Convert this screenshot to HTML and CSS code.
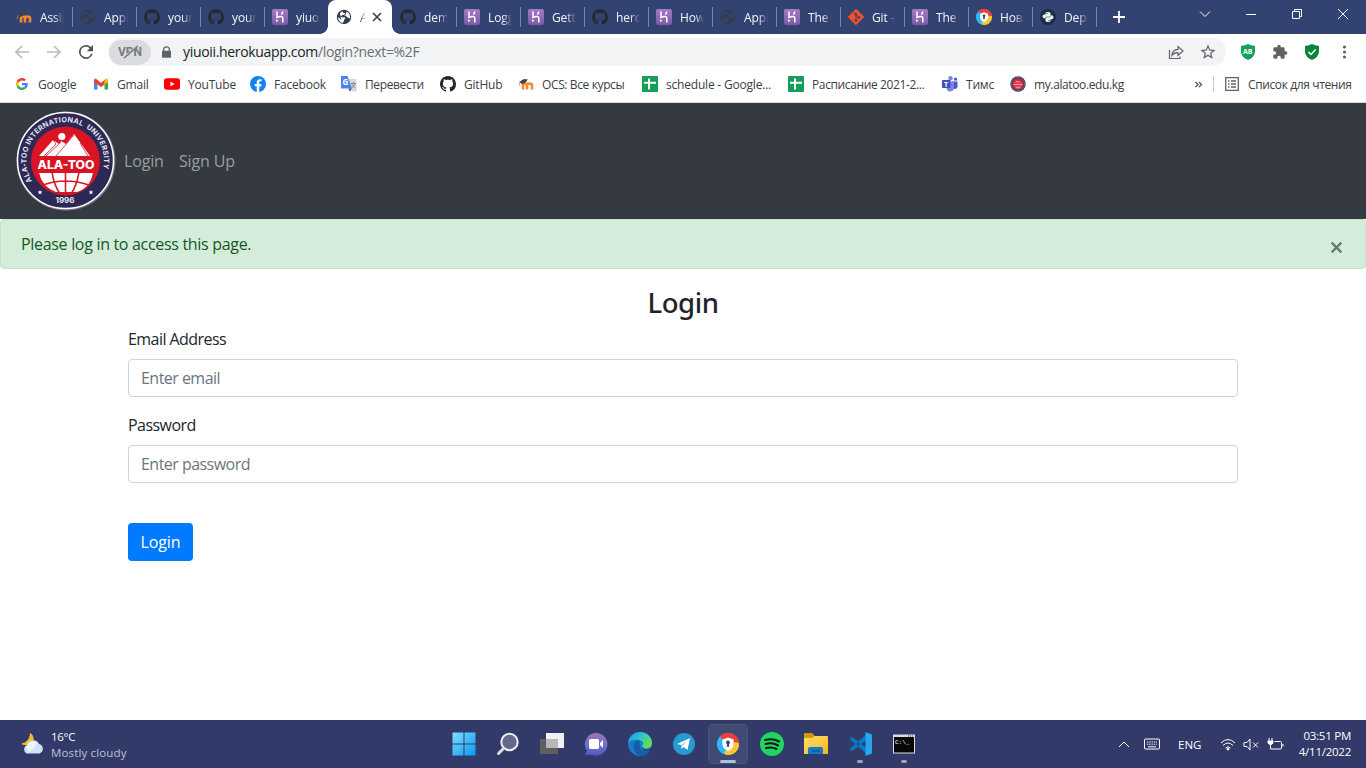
FILE: index.html
```html
<!DOCTYPE html>
<html lang="en">
<head>
<meta charset="utf-8">
<title>Login</title>
<link rel="stylesheet" href="styles.css">
</head>
<body>
<svg class="defs" width="0" height="0">
<defs>
<linearGradient id="purple" x2="0" y2="1"><stop stop-color="#a57bc5"/><stop offset="1" stop-color="#7c5aa6"/></linearGradient>
<linearGradient id="win" x2="1" y2="1"><stop stop-color="#7be0ff"/><stop offset="1" stop-color="#0797f5"/></linearGradient>
<linearGradient id="chatg" x2="0" y2="1"><stop stop-color="#a26fb5"/><stop offset=".5" stop-color="#7470c8"/><stop offset="1" stop-color="#5058c9"/></linearGradient>
<linearGradient id="edgeg" x2="1" y2=".6"><stop stop-color="#2592e8"/><stop offset=".5" stop-color="#2cc3d2"/><stop offset="1" stop-color="#66e052"/></linearGradient>
<linearGradient id="folderg" x2="1" y2="1"><stop stop-color="#ffdc68"/><stop offset="1" stop-color="#f7b722"/></linearGradient>
<symbol id="moodle" viewBox="0 0 16 16"><path d="M5 13.500V9.500q0-2 2-2t2 2v4M9 9.500q0-2 2.300-2 2.700 0 2.700 2v4" fill="none" stroke="#f18a2c" stroke-width="2.600"/><path d="M1 6 6 3l4 .5L7 7 4 8z" fill="#4a4240"/><path d="M2 6.300 1 10" stroke="#b98b60" stroke-width=".7"/></symbol>
<symbol id="globe" viewBox="0 0 16 16"><circle cx="8" cy="8" r="7.200" fill="#343d4a"/><path d="M6.700 2.200c-.2 1.500 1 1.800 2.200 1.800.8 1.600-1 2-2.500 2C5.500 7 4.600 7.400 4.400 8.300l4.300-.1c1 1.200.6 1.900-.6 2.200.2 1.600-1.200 2.200-1 3.700C3.500 13.500 2 10.700 2.200 8L4 9.500 5 11l-.4-4.500C3 5 4.500 2.900 6.700 2.200zm3.800.6c3.300 1.500 4 4.300 3.300 7-1-1.300-3.200-1-3.600-2.700L8.400 6.400l1.200-.9z" fill="var(--land)"/></symbol>
<symbol id="github" viewBox="0 0 16 16"><path fill="#24292e" d="M8 0C3.580 0 0 3.580 0 8c0 3.540 2.290 6.530 5.470 7.590.4.07.55-.17.55-.38 0-.19-.01-.82-.01-1.490-2.010.37-2.530-.49-2.690-.94-.09-.23-.48-.94-.82-1.130-.28-.15-.68-.52-.01-.53.63-.01 1.080.58 1.230.82.72 1.210 1.870.87 2.330.66.07-.52.28-.87.51-1.070-1.780-.2-3.640-.89-3.640-3.950 0-.87.31-1.590.82-2.150-.08-.2-.36-1.020.08-2.120 0 0 .67-.21 2.200.82.64-.18 1.320-.27 2-.27.68 0 1.360.09 2 .27 1.530-1.040 2.200-.82 2.200-.82.44 1.100.16 1.920.08 2.120.51.56.82 1.270.82 2.150 0 3.070-1.870 3.750-3.650 3.950.29.25.54.73.54 1.480 0 1.070-.01 1.930-.01 2.200 0 .21.15.46.55.38A8.013 8.013 0 0 0 16 8c0-4.420-3.580-8-8-8z"/></symbol>
<symbol id="heroku" viewBox="0 0 16 16"><rect width="16" height="16" rx="2" fill="url(#purple)"/><path d="M5 2.500v6q5.800-2.200 5.800.6v4.400M10.800 2.500q0 1.800-1.500 3" fill="none" stroke="#fff" stroke-width="1.500"/><path d="M4.300 10v3.500l2-1.700z" fill="#fff"/></symbol>
<symbol id="git" viewBox="0 0 16 16"><path d="M8 .3 15.700 8 8 15.700.3 8z" fill="#f4502c" stroke="#f4502c" stroke-linejoin="round"/><path d="M5.500 3 8 5.500v6M8 6l3 2.500" stroke="#334371" fill="none"/><g fill="#334371"><circle cx="8" cy="5.500" r="1.200"/><circle cx="8" cy="11.500" r="1.200"/><circle cx="11" cy="8.500" r="1.200"/></g></symbol>
<symbol id="secure" viewBox="0 0 24 24"><circle cx="12" cy="12" r="12" fill="#27b5f5"/><path d="M12 12 3 4A12 12 0 0 1 24 12l-6 2z" fill="#ef3f3c"/><path d="M24 11A12 12 0 0 1 10 23.800l-4-4 10-3 2-7z" fill="#ffc52e"/><path d="M4 3.600A12 12 0 0 0 7 22.900l3-5-5-6z" fill="#2fb8f7"/><path d="m12 5 6 2.200v5c0 3.500-2.500 5.800-6 7.300-3.500-1.500-6-3.800-6-7.300v-5z" fill="#fff"/><circle cx="12" cy="10.300" r="2" fill="#344267"/><path d="M11.200 11h1.600l.6 4h-2.800z" fill="#344267"/></symbol>
<symbol id="python" viewBox="0 0 16 16"><circle cx="8" cy="8" r="8" fill="#173044"/><path d="M5.500 6V4.300Q5.500 3 8 3t2.500 1.300V6.500Q10.500 7.700 9 7.700H6.500Q5.200 7.700 5.200 9.300H4Q2.500 9 2.500 7.500T4 5.500h4M10.500 10v1.700Q10.500 13 8 13t-2.500-1.300V9.500Q5.500 8.300 7 8.300h2.500q1.300 0 1.300-2h1.200q1.500.5 1.500 2t-1.500 2H8" fill="#eef3f4"/><path d="M6.500 4.500h1M8.500 11.500h1" stroke="#173044"/></symbol>
<symbol id="google" viewBox="0 0 48 48"><path fill="#ea4335" d="M24 9.500c3.540 0 6.710 1.220 9.210 3.600l6.850-6.850C35.900 2.380 30.470 0 24 0 14.620 0 6.510 5.380 2.560 13.220l7.980 6.190C12.430 13.720 17.740 9.500 24 9.500z"/><path fill="#4285f4" d="M46.980 24.550c0-1.570-.15-3.090-.38-4.550H24v9.020h12.940c-.58 2.960-2.260 5.480-4.780 7.180l7.730 6c4.510-4.180 7.090-10.360 7.090-17.650z"/><path fill="#fbbc05" d="M10.530 28.590A14.500 14.500 0 0 1 10.540 19.410l-7.980-6.190a24 24 0 0 0 0 21.560z"/><path fill="#34a853" d="M24 48c6.480 0 11.930-2.130 15.890-5.810l-7.730-6C30.010 37.640 27.240 38.490 24 38.490c-6.260 0-11.570-4.220-13.470-9.910l-7.980 6.190C6.510 42.620 14.620 48 24 48z"/></symbol>
<symbol id="gmail" viewBox="0 0 16 16"><path d="M1 13.500V4h3.500v9.500z" fill="#4285f4"/><path d="M11.500 13.500V4H15v9.500z" fill="#34a853"/><path d="M1 4.500Q1 2.200 3 2.700l5 4 5-4-1.500 5.800L8 11 4.500 8.500 1 6z" fill="#ea4335"/><path d="M11.500 4 13 2.700q2-.5 2 1.800v1.500l-3.500 2.500z" fill="#fbbc04"/></symbol>
<symbol id="youtube" viewBox="0 0 16 16"><rect y="2.300" width="16" height="11.500" rx="2.700" fill="red"/><path d="m6.400 5.500 4.200 2.500-4.200 2.500z" fill="#fff"/></symbol>
<symbol id="facebook" viewBox="0 0 24 24"><circle cx="12" cy="12" r="12" fill="#1382f5"/><path fill="#fff" d="M10.130 24v-8.440H7.080v-3.490h3.050V9.410c0-3.020 1.790-4.690 4.530-4.690 1.310 0 2.680.24 2.680.24v2.970h-1.510c-1.490 0-1.960.93-1.960 1.890v2.260h3.330l-.53 3.490h-2.800V24z"/></symbol>
<symbol id="translate" viewBox="0 0 16 16"><path d="M6 3h9.500v12.500H9z" fill="#d5d8de"/><path d="M0 0h6.500L11 12.500H0z" fill="#4c83e8"/><path d="m7.500 12.500 3.500 0-2.500 3z" fill="#3559b0"/><path d="M10 7.500h5M12.500 6v1.500M14 8q-1 3-3.500 4M11 8.500q1 2 3.500 3.500" stroke="#718096" stroke-width=".9" fill="none"/><text x="1.500" y="9" font-size="8" font-weight="700" fill="#fff">G</text></symbol>
<symbol id="sheet" viewBox="0 0 16 16"><rect width="16" height="16" rx="1" fill="#139e59"/><path d="M2 6.700h12M7 2.500v11" stroke="#fff" stroke-width="2"/></symbol>
<symbol id="teams" viewBox="0 0 16 16"><circle cx="8.500" cy="2.300" r="2.200" fill="#7b83eb"/><circle cx="13.500" cy="3.200" r="1.600" fill="#5059c9"/><path d="M10 5.500h5.500V10q0 3-3 3H10z" fill="#5059c9"/><path d="M4.500 5.500H12V12q-.5 3.500-3.800 3.500T4.500 12z" fill="#7b83eb"/><rect y="4" width="8.500" height="8" rx=".7" fill="#464eb8"/><text x="2" y="10.500" font-size="7" font-weight="700" fill="#fff">T</text></symbol>
<symbol id="mini-seal" viewBox="0 0 16 16"><circle cx="8" cy="8" r="7.700" fill="#38345b"/><circle cx="8" cy="8" r="6.500" fill="none" stroke="#878091" stroke-width=".7"/><circle cx="8" cy="8" r="5.500" fill="#da2434"/><path d="M4 6.500 7 4.500l4 1.500 1 .5M4.500 10.500h7l-2 2h-3z" fill="#e8858f"/><path d="M3.500 8.500h9" stroke="#f29aa2" stroke-width="1.300"/></symbol>
</defs>
</svg>

<header class="browser">
  <div class="strip">
    <div class="tabs">
      <div class="tab"><svg><use href="#moodle"/></svg><span>Assig</span></div>
      <div class="tab"><svg><use href="#globe"/></svg><span>Appl</span></div>
      <div class="tab"><svg><use href="#github"/></svg><span>your</span></div>
      <div class="tab"><svg><use href="#github"/></svg><span>your</span></div>
      <div class="tab"><svg><use href="#heroku"/></svg><span>yiuoi</span></div>
      <div class="tab active"><svg><use href="#globe"/></svg><span>A</span><svg class="close" viewBox="0 0 10 10"><path d="m1 1 8 8M9 1 1 9"/></svg></div>
      <div class="tab"><svg><use href="#github"/></svg><span>dem</span></div>
      <div class="tab"><svg><use href="#heroku"/></svg><span>Logg</span></div>
      <div class="tab"><svg><use href="#heroku"/></svg><span>Getti</span></div>
      <div class="tab"><svg><use href="#github"/></svg><span>hero</span></div>
      <div class="tab"><svg><use href="#heroku"/></svg><span>How</span></div>
      <div class="tab"><svg><use href="#globe"/></svg><span>Appl</span></div>
      <div class="tab"><svg><use href="#heroku"/></svg><span>The I</span></div>
      <div class="tab"><svg><use href="#git"/></svg><span>Git -</span></div>
      <div class="tab"><svg><use href="#heroku"/></svg><span>The I</span></div>
      <div class="tab"><svg><use href="#secure"/></svg><span>Нова</span></div>
      <div class="tab"><svg><use href="#python"/></svg><span>Depl</span></div>
    </div>
    <svg class="plus" viewBox="0 0 12 12"><path d="M6 0v12M0 6h12"/></svg>
    <div class="controls">
      <svg viewBox="0 0 12 12"><path d="m1 3.500 5 5 5-5"/></svg>
      <svg viewBox="0 0 12 12"><path d="M1 6.500h10"/></svg>
      <svg viewBox="0 0 12 12"><path d="M1.500 3.500h7v7h-7zM3.500 3.500v-2h7v7h-2"/></svg>
      <svg viewBox="0 0 12 12"><path d="m1 1 10 10M11 1 1 11"/></svg>
    </div>
  </div>
  <div class="toolbar">
    <svg class="nav" viewBox="0 0 16 16"><path d="M15 8H2M8 2 2 8l6 6"/></svg>
    <svg class="nav" viewBox="0 0 16 16"><path d="M1 8h13M8 2l6 6-6 6"/></svg>
    <svg class="reload" viewBox="0 0 16 16"><path d="M13.650 2.350A8 8 0 1 0 15.730 10h-2.080A6 6 0 1 1 8 2c1.660 0 3.140.69 4.220 1.780L9 7h7V0z"/></svg>
    <div class="address">
      <div class="vpn"><span>VPN</span><svg viewBox="0 0 24 14"><path class="gap" d="M5 13 19 1"/><path d="M6 13 20 1"/></svg></div>
      <svg class="lock" viewBox="0 0 10 13"><path fill="#5f6368" d="M1 5V4a4 4 0 0 1 8 0v1q1 0 1 1v6q0 1-1 1H1q-1 0-1-1V6q0-1 1-1zm1.500 0h5V4a2.500 2.500 0 0 0-5 0z"/></svg>
      <span class="url"><b>yiuoii.herokuapp.com</b>/login?next=%2F</span>
      <svg class="share" viewBox="0 0 16 16"><path d="M1.500 6v8.500H12v-2M4 11.500q.3-6 6-6.200V2.500L15 7l-5 4.500V8.700q-4-.2-6 2.800z"/></svg>
      <svg class="star" viewBox="0 0 24 24"><path fill="#5f6368" d="m22 9.240-7.190-.62L12 2 9.190 8.630 2 9.240l5.460 4.730L5.820 21 12 17.270 18.180 21l-1.630-7.030zM12 15.400l-3.760 2.270 1-4.280-3.320-2.880 4.380-.38L12 6.100l1.710 4.040 4.380.38-3.320 2.880 1 4.280z"/></svg>
    </div>
    <div class="extensions">
      <svg viewBox="0 0 16 16"><path d="M1 2q4-.3 7-2 3 1.700 7 2v6q-.3 5-7 8-6.700-3-7-8z" fill="#13a25a"/><text x="3" y="10.300" font-size="7" font-weight="700" fill="#fff">AB</text></svg>
      <svg viewBox="0 0 24 24"><path fill="#5f6368" d="M20.500 11H19V7a2 2 0 0 0-2-2h-4V3.500a2.500 2.500 0 0 0-5 0V5H4a2 2 0 0 0-2 2v3.800h1.500a2.700 2.700 0 0 1 0 5.400H2V20a2 2 0 0 0 2 2h3.800v-1.500a2.700 2.700 0 0 1 5.400 0V22H17a2 2 0 0 0 2-2v-4h1.500a2.500 2.500 0 0 0 0-5z"/></svg>
      <svg viewBox="0 0 16 16"><path d="M1 2q4-.3 7-2 3 1.700 7 2v6q-.3 5-7 8-6.700-3-7-8z" fill="#07863f"/><path d="m4.500 8 2.500 2.500 4.500-5" stroke="#fff" stroke-width="1.500" fill="none"/></svg>
      <svg viewBox="0 0 16 16" fill="#5f6368"><circle cx="8.500" cy="3" r="1.600"/><circle cx="8.500" cy="8" r="1.600"/><circle cx="8.500" cy="13" r="1.600"/></svg>
    </div>
  </div>
  <div class="bookmarks">
    <div class="mark"><svg class="sm"><use href="#google"/></svg><span>Google</span></div>
    <div class="mark"><svg><use href="#gmail"/></svg><span>Gmail</span></div>
    <div class="mark"><svg><use href="#youtube"/></svg><span>YouTube</span></div>
    <div class="mark"><svg><use href="#facebook"/></svg><span>Facebook</span></div>
    <div class="mark cyr"><svg><use href="#translate"/></svg><span>Перевести</span></div>
    <div class="mark"><svg><use href="#github"/></svg><span>GitHub</span></div>
    <div class="mark cyr"><svg><use href="#moodle"/></svg><span>OCS: Все курсы</span></div>
    <div class="mark"><svg><use href="#sheet"/></svg><span>schedule - Google...</span></div>
    <div class="mark cyr"><svg><use href="#sheet"/></svg><span>Расписание 2021-2...</span></div>
    <div class="mark"><svg><use href="#teams"/></svg><span>Тимс</span></div>
    <div class="mark cyr"><svg><use href="#mini-seal"/></svg><span>my.alatoo.edu.kg</span></div>
    <svg class="more" viewBox="0 0 8 8"><path d="m1 1 3 3-3 3M5 1l3 3-3 3"/></svg>
    <div class="reading"><svg viewBox="0 0 14 14"><path d="M.7.7h12.600v12.600H.7zM3 4h1.500M6 4h5M3 7h1.500M6 7h5M3 10h1.500M6 10h5"/></svg><span>Список для чтения</span></div>
  </div>
</header>

<main class="page">
  <nav class="navbar">
    <svg class="seal" viewBox="0 0 100 100">
      <defs><path id="ring" d="M16 70A38.800 38.800 0 1 1 83 69"/><clipPath id="half"><path d="M23 62h54q-2 17-20 25H43Q25 79 23 62z"/></clipPath></defs>
      <circle cx="50" cy="50" r="49.500" fill="#77788e"/><circle cx="49.500" cy="49.500" r="48" fill="#2d2855" stroke="#fff" stroke-width="1.500"/>
      <circle cx="49.500" cy="50" r="34.500" fill="#d91524"/>
      <circle cx="45.800" cy="25.500" r="3.600" fill="#fff"/>
      <path d="m23 45 14-16 6 4 2-3 5 3 8-10 16 22z" fill="#fff"/><path d="m37 29 3 4-12 12M45 31l-15 14M58 24l-18 21M64 32l8 13" stroke="#d91524" stroke-width=".8" fill="none"/>
      <text x="50" y="57.500" class="seal-name" textLength="57" lengthAdjust="spacingAndGlyphs">ALA-TOO</text>
      <g clip-path="url(#half)"><path d="M23 62h54q-3 15-16 19H40Q26 76 23 62z" fill="#fff"/><path d="M49.500 61v24M36 61q2 13 8 22M63 61q-2 13-8 22M27 74q22-8 46 0" fill="none" stroke="#d91524" stroke-width="1.600"/></g>
      <text class="seal-ring"><textPath href="#ring">ALA-TOO INTERNATIONAL &#160;UNIVERSITY</textPath></text>
      <text x="49" y="91.500" class="seal-year">1996</text><path d="m24 79 .7 1.500 1.600.1-1.200 1.100.4 1.600-1.500-.8-1.500.8.4-1.600-1.200-1.100 1.600-.1zM75 79l.7 1.500 1.600.1-1.200 1.100.4 1.600-1.500-.8-1.500.8.4-1.600-1.200-1.100 1.600-.1z" fill="#fff"/>
    </svg>
    <a class="link login-link">Login</a><a class="link">Sign Up</a>
  </nav>
  <div class="alert"><span>Please log in to access this page.</span><svg viewBox="0 0 12 12"><path d="m1.500 1.500 9 9M10.500 1.500l-9 9"/></svg></div>
  <form class="form">
    <h1>Login</h1>
    <label>Email Address</label>
    <input class="email" type="text" placeholder="Enter email">
    <label>Password</label>
    <input type="text" placeholder="Enter password">
    <button type="button">Login</button>
  </form>
</main>

<footer class="taskbar">
  <div class="weather">
    <svg viewBox="0 0 24 22"><path d="M10 0q5 5 1 10-4 3-10 1 8-2 9-11z" fill="#f5bd28" stroke="#f5bd28"/><path d="M6 21a5 5 0 0 1 0-9 7 7 0 0 1 13-1 5.200 5.200 0 0 1 0 10z" fill="#cfe3f5"/><path d="M7 19a4 4 0 0 1 0-6 6 6 0 0 1 10-3l-5 7z" fill="#edf5fb"/></svg>
    <div><span class="temp">16°C</span><span class="sky">Mostly cloudy</span></div>
  </div>
  <div class="apps">
    <div class="app"><svg viewBox="0 0 24 24"><path d="M.5.500h11v11H.5zM12.500.5h11v11h-11zM.5 12.500h11v11H.5zM12.500 12.500h11v11h-11z" fill="url(#win)"/></svg></div>
    <div class="app"><svg viewBox="0 0 24 24"><circle cx="13.500" cy="10" r="8.200" fill="#62698c" stroke="#eee" stroke-width="2"/><path d="m7.500 16.500-5 5" stroke="#ddd" stroke-width="3" stroke-linecap="round"/></svg></div>
    <div class="app"><svg viewBox="0 0 24 24"><path d="M6 1h18v15H6z" fill="#f1f1f1"/><path d="M0 7h18v15H0z" fill="#5d605f"/><path d="M6 7h12v9H6z" fill="#b7b7b8"/></svg></div>
    <div class="app"><svg viewBox="0 0 24 24"><path d="M12 1a11.300 11.300 0 1 1-4 21.800H1l2-4A11.300 11.300 0 0 1 12 1z" fill="url(#chatg)"/><rect x="5" y="7" width="10" height="10" rx="1.500" fill="#fff"/><path d="m16 11 3-3v8l-3-3z" fill="#fff"/></svg></div>
    <div class="app"><svg viewBox="0 0 24 24"><circle cx="12" cy="12" r="12" fill="#197bce"/><path d="M0 11C1 4 6 0 12 0c8 0 12 6 12 11 0 6-8 7-10 3 3-3 0-6-4-6-4-1-8 0-10 3z" fill="url(#edgeg)"/><path d="M11 8C2 10 5 22 13 24c4 0 7-2 9-5-6 2-11-1-10-6z" fill="#155da7"/><path d="M13.500 14q0 2.500 3.500 3.500 4 1 7-2.500v2l-2 2q-8 1.500-8.500-5z" fill="#313a68"/></svg></div>
    <div class="app"><svg viewBox="0 0 24 24"><circle cx="12" cy="12" r="11" fill="#269bd1"/><path d="m5 12 13-6-2.500 12-4-3-2 2-.5-4z" fill="#fff"/><path d="m9 13 6-4-4.500 5-1 2" fill="#a6cce3"/></svg></div>
    <div class="app selected"><svg viewBox="-1 -1 26 26"><use href="#secure" width="24" height="24"/></svg></div>
    <div class="app"><svg viewBox="0 0 24 24"><circle cx="12" cy="12" r="12" fill="#1ed760"/><path d="M5 8q8-2 14 1.500M5.500 12q7-2 12.500 1.500M6 16q6-1.500 10.500 1" stroke="#111b16" stroke-width="2.100" stroke-linecap="round" fill="none"/></svg></div>
    <div class="app"><svg viewBox="0 0 24 24"><path d="M0 2q0-1 1-1h7l3 3h12v5H0z" fill="#d99900"/><path d="M0 6h8l3-2h12q1 0 1 1v17H0z" fill="url(#folderg)"/><path d="M4 22v-5q0-2 2-2h11q2 0 2 2v5z" fill="#1479c9"/><path d="M8 19h8" stroke="#095aa0" stroke-width="1.500"/></svg></div>
    <div class="app running"><svg viewBox="0 0 24 24"><path d="m2 7 16 14v-5L4 5.500zM2 17 18 3v5L4 18.500z" fill="#0879c5" stroke="#0879c5" stroke-linejoin="round"/><path d="m17.500 0 6.500 2.500v19L17.500 24z" fill="#28a5ed"/></svg></div>
    <div class="app running"><svg viewBox="0 0 24 24"><rect x="1" y="2.500" width="22" height="19" fill="#ddd"/><path d="M2 5h20v15.500H2z" fill="#080808"/><path d="M16 4h1M18 4h1M20 4h1" stroke="#345"/><text x="3" y="12" font-size="6" fill="#fff" font-family="Liberation Mono">C:\_</text></svg></div>
  </div>
  <div class="tray">
    <svg class="chev" viewBox="0 0 12 8"><path d="m1 7 5-5 5 5"/></svg>
    <svg class="keyb" viewBox="0 0 16 12"><rect x=".5" y="1" width="15" height="10" rx="1"/><path d="M3 4h10M3 6.200h10" stroke-dasharray="1.300 1"/><path d="M4 8.800h8"/></svg>
    <span class="lang">ENG</span>
    <svg class="wifi" viewBox="0 0 16 13"><path d="M1 5q7-7 14 0M3 7.500q5-5 10 0M5.500 10q2.500-2.500 5 0"/><circle cx="8" cy="11" r="1" fill="#fff"/></svg>
    <svg class="sound" viewBox="0 0 16 13"><path d="M1 4.500h3L7 1v11L4 8.500H1zM10 4.500l5 5M15 4.500l-5 5"/></svg>
    <svg class="battery" viewBox="0 0 17 13"><path d="M7 11h6.500q1 0 1-1V4.500q0-1-1-1H7.500M16 6v2.500M2 0v3M5 0v3M3.500 6v5H7"/><path d="M1 3h5v2Q5 6.500 3.500 6.500T1 5z" fill="#fff"/></svg>
    <div class="clock"><span>03:51 PM</span><span>4/11/2022</span></div>
  </div>
</footer>
</body>
</html>
```
FILE: styles.css
```css
* { box-sizing: border-box; }
body { margin: 0; width: 1366px; height: 768px; overflow: hidden; display: flex; flex-direction: column; background: #fff; font-family: "Open Sans", "Noto Sans", sans-serif; font-size: 12px; }
svg { display: block; flex: none; }
.defs { position: absolute; }
.browser { height: 103px; flex: none; border-bottom: 1px solid #d5d7da; }
.strip { height: 34px; background: #334371; display: flex; padding-left: 8px; --land: #334371; }
.tabs { display: flex; }
.tab { width: 64px; height: 34px; display: flex; align-items: center; padding-left: 8px; color: #f4f5f9; position: relative; letter-spacing: -.1px; }
.tab::after { content: ""; width: 1px; height: 20px; background: #7a84a3; margin: 0 -1px 0 auto; }
.tab svg { width: 16px; height: 16px; }
.tab span { width: 24px; flex: none; margin-left: 8px; white-space: nowrap; -webkit-mask-image: linear-gradient(90deg, #000 60%, transparent); mask-image: linear-gradient(90deg, #000 60%, transparent); }
.active { --land: #fff; background: #fff; color: #444; border-radius: 8px 8px 0 0; z-index: 1; }
.tab:nth-child(5)::after, .active::after { display: none; }
.active::before { content: ""; position: absolute; left: -8px; right: -8px; bottom: 0; height: 8px; background: radial-gradient(circle at 0 0, transparent 7.500px, #fff 8px) left / 8px 8px no-repeat, radial-gradient(circle at 8px 0, transparent 7.500px, #fff 8px) right / 8px 8px no-repeat; }
.active span { width: 6px; -webkit-mask-image: linear-gradient(90deg, #000, transparent); mask-image: linear-gradient(90deg, #000, transparent); }
.active .close { width: 10px; height: 10px; margin-left: 6px; }
.close path { stroke: #3c4043; stroke-width: 1.600; }
.plus { width: 12px; height: 12px; margin: 11px 0 0 17px; }
.plus path { stroke: #fff; stroke-width: 1.800; }
.controls { display: flex; gap: 34px; margin: 8px 17px 0 auto; }
.controls svg { width: 12px; height: 12px; }
.controls path { fill: none; stroke: #fff; }
.toolbar { height: 36px; display: flex; align-items: center; padding-left: 14px; }
.nav { width: 16px; height: 16px; margin-right: 16px; }
.nav path { fill: none; stroke: #b9bbbe; stroke-width: 1.700; }
.reload { width: 14px; height: 14px; margin-left: 1px; fill: #505458; }
.address { width: 1118px; height: 28px; border-radius: 14px; background: #f1f3f4; margin-left: 15px; display: flex; align-items: center; padding: 0 9px 0 1px; }
.vpn { width: 42px; height: 25px; border-radius: 13px; background: #dadce0; display: grid; place-items: center; color: #777b81; font: 700 12px Roboto, sans-serif; }
.vpn span, .vpn svg { grid-area: 1 / 1; }
.vpn svg { width: 24px; height: 14px; }
.vpn path { stroke: #74787d; stroke-width: 1.500; }
.vpn .gap { stroke: #dadce0; }
.lock { width: 9px; height: 12px; margin-left: 11px; }
.url { font-size: 14px; letter-spacing: -.33px; color: #6a6e73; margin: -1px 0 0 12px; }
.url b { font-weight: 400; color: #202124; }
.share { width: 16px; height: 16px; margin-left: auto; }
.share path { fill: none; stroke: #5f6368; stroke-width: 1.200; }
.star { width: 18px; height: 18px; margin-left: 15px; }
.extensions { display: flex; gap: 16px; margin-left: 14px; }
.extensions svg { width: 16px; height: 16px; }
.bookmarks { height: 32px; padding: 0 15px 4px 14px; display: grid; align-items: center; grid-template-columns: 79px 71px 86px 91px 99px 78px 124px 146px 154px 68px 184px 19px 1fr; color: #3c4043; letter-spacing: -.2px; }
.mark { display: flex; align-items: center; gap: 8px; white-space: nowrap; }
.cyr, .reading { letter-spacing: -.38px; }
.mark svg { width: 16px; height: 16px; }
.mark .sm { width: 12px; height: 12px; margin: 0 2px; }
.more { width: 8px; height: 7px; overflow: visible; }
.more path { fill: none; stroke: #50545a; stroke-width: 1.500; }
.reading { height: 16px; border-left: 1px solid #c8cacd; display: flex; align-items: center; padding-left: 11px; gap: 9px; white-space: nowrap; }
.reading svg { width: 14px; height: 14px; }
.reading path { fill: none; stroke: #5f6368; stroke-width: 1.300; }
.page { flex: 1; font-size: 16px; }
.navbar { height: 116px; background: #343a40; display: flex; align-items: center; padding-left: 16px; }
.seal { width: 100px; height: 100px; margin-right: 8px; }
.seal text { font-family: Inter, sans-serif; font-weight: 700; }
.seal .seal-name { text-anchor: middle; font-weight: 800; font-size: 11.500px; fill: #fff; }
.seal .seal-ring { font-size: 7.200px; letter-spacing: .28px; fill: #e8e7ef; }
.seal .seal-year { font-size: 8px; text-anchor: middle; fill: #e8e7ef; }
.link { color: #9a9da0; letter-spacing: -.15px; }
.login-link { width: 55px; }
.alert { height: 50px; border: 1px solid #c3e6cb; border-radius: 4px; background: #d4edda; color: #155724; display: flex; align-items: center; justify-content: space-between; padding: 0 22px 0 20px; letter-spacing: -.31px; }
.alert svg { width: 13px; height: 13px; margin-top: 6px; }
.alert path { stroke: #6a776d; stroke-width: 2; }
.form { width: 1110px; margin: 0 auto; color: #212529; display: flex; flex-direction: column; letter-spacing: -.55px; }
.form h1 { font: 500 27.500px/34px "Noto Sans", sans-serif; letter-spacing: -.4px; text-align: center; margin: 17px 0 7px; }
.form label { height: 24px; line-height: 24px; margin-bottom: 8px; }
.form input { font: inherit; letter-spacing: -.53px; height: 38px; border: 1px solid #ced4da; border-radius: 4px; padding: 6px 12px; }
.form input::placeholder { color: #6c757d; opacity: 1; }
.form .email { margin-bottom: 16px; }
.form button { width: 65px; height: 38px; border: 0; border-radius: 4px; background: #007bff; color: #fff; font: inherit; letter-spacing: -.15px; padding: 0; margin-top: 40px; }
.taskbar { height: 48px; flex: none; background: #313a68; color: #fff; display: grid; grid-template-columns: 443.500px 1fr 266px; }
.weather { display: flex; padding: 12px 0 0 21px; gap: 7px; }
.weather svg { width: 23px; height: 22px; margin-top: 1px; }
.weather div { display: flex; flex-direction: column; line-height: 16px; margin-top: -3px; }
.temp { font-size: 11.500px; letter-spacing: -.3px; }
.sky { font-size: 11.500px; letter-spacing: .15px; color: #bfc3d2; }
.apps { display: flex; gap: 4px; padding-top: 4px; }
.app { width: 40px; height: 40px; border-radius: 4px; display: grid; place-items: center; position: relative; }
.app svg { width: 24px; height: 24px; }
.selected { background: #414a73; border: 1px solid #4a5279; }
.selected::after, .running::after { content: ""; position: absolute; bottom: 1px; left: 17px; width: 6px; height: 3px; border-radius: 2px; background: #9fa4bb; }
.selected::after { left: 11px; width: 16px; bottom: 0; background: #aebfe0; }
.tray { display: flex; align-items: center; padding-right: 15px; }
.tray svg { fill: none; stroke: #fff; }
.chev { width: 12px; height: 8px; margin-left: 18px; }
.keyb { width: 16px; height: 12px; margin-left: 14px; }
.lang { font-size: 11.500px; width: 25px; margin-left: 18px; }
.wifi { width: 16px; height: 13px; margin-left: 17px; }
.sound { width: 16px; height: 13px; margin-left: 7px; }
.battery { width: 17px; height: 13px; margin-left: 8px; }
.clock { display: flex; flex-direction: column; align-items: flex-end; margin-left: auto; font-size: 11.500px; line-height: 16px; letter-spacing: -.25px; white-space: nowrap; }
```
